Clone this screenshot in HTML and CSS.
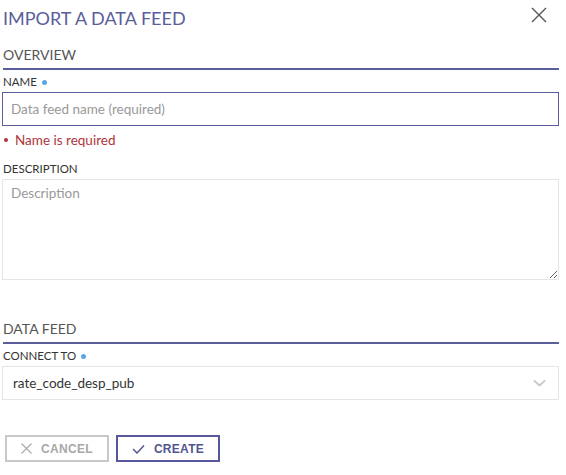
FILE: index.html
```html
<!DOCTYPE html>
<html>
<head>
<meta charset="utf-8">
<link rel="stylesheet" href="styles.css">
</head>
<body>
<div class="dialog">
  <div class="header">
    <h1 class="title">IMPORT A DATA FEED</h1>
    <button class="close" aria-label="Close">
      <svg width="16" height="16" viewBox="0 0 16 16"><path d="M1 1L15 15M15 1L1 15" stroke="#555" stroke-width="1.4" fill="none"/></svg>
    </button>
  </div>

  <div class="section">
    <h2 class="section-title">OVERVIEW</h2>
    <div class="field">
      <label class="label">NAME <span class="req"></span></label>
      <input class="input input-focus" type="text" placeholder="Data feed name (required)">
      <div class="error"><span class="err-dot"></span>Name is required</div>
    </div>
    <div class="field">
      <label class="label">DESCRIPTION</label>
      <textarea class="textarea" placeholder="Description"></textarea>
    </div>
  </div>

  <div class="section section-feed">
    <h2 class="section-title">DATA FEED</h2>
    <div class="field">
      <label class="label">CONNECT TO <span class="req"></span></label>
      <div class="select">
        <span class="select-value">rate_code_desp_pub</span>
        <svg class="chev" width="13" height="8" viewBox="0 0 13 8"><path d="M1 1.5L6.5 6.5L12 1.5" stroke="#c8c8c8" stroke-width="1.8" fill="none"/></svg>
      </div>
    </div>
  </div>

  <div class="actions">
    <button class="btn btn-cancel">
      <svg width="11" height="11" viewBox="0 0 11 11"><path d="M0.5 0.5L10.5 10.5M10.5 0.5L0.5 10.5" stroke="#aaa" stroke-width="1.2" fill="none"/></svg>
      CANCEL
    </button>
    <button class="btn btn-create">
      <svg width="13" height="10" viewBox="0 0 13 10"><path d="M1 5L5 9L12 1.5" stroke="#52558f" stroke-width="1.5" fill="none"/></svg>
      CREATE
    </button>
  </div>
</div>
</body>
</html>
```

FILE: styles.css
```css
* { box-sizing: border-box; }
body {
  margin: 0;
  background: #fff;
  font-family: "Lato", "Open Sans", sans-serif;
  color: #333;
}
.dialog {
  width: 557px;
  margin-left: 2px;
}
.header {
  display: flex;
  justify-content: space-between;
  align-items: flex-start;
  height: 43px;
}
.title {
  margin: 6px 0 0 1px;
  font-size: 18px;
  line-height: 24px;
  font-weight: 400;
  color: #5a5e9a;
}
.close {
  border: 0;
  background: none;
  padding: 0;
  margin: 7px 12px 0 0;
  width: 16px;
  height: 16px;
  display: flex;
}
.section-title {
  margin: 0 0 0 1px;
  font-size: 14px;
  line-height: 24px;
  font-weight: 400;
  color: #555;
  padding-bottom: 1px;
  border-bottom: 2px solid #5a5e9a;
}
.field {
  display: flex;
  flex-direction: column;
}
.label {
  display: flex;
  align-items: center;
  gap: 5px;
  font-size: 11.5px;
  line-height: 14px;
  margin: 5px 0 3px 1px;
  color: #333;
}
.req {
  width: 5px;
  height: 5px;
  border-radius: 50%;
  background: #5ba4e6;
  display: inline-block;
}
.input {
  height: 34px;
  border: 1px solid #e3e3e3;
  padding: 0 8px;
  font-family: inherit;
  font-size: 13.5px;
  color: #333;
  outline: none;
}
.input-focus { border-color: #5a5e9a; }
.input::placeholder, .textarea::placeholder { color: #999; }
.error {
  display: flex;
  align-items: center;
  font-size: 13.5px;
  line-height: 16px;
  margin: 6px 0 9px;
  color: #b0343a;
}
.err-dot {
  width: 4px;
  height: 4px;
  border-radius: 50%;
  background: #b0343a;
  margin: 0 7px 0 2px;
}
.textarea {
  height: 101px;
  border: 1px solid #e6e6e6;
  padding: 5px 8px;
  font-family: inherit;
  font-size: 13.5px;
  resize: vertical;
  outline: none;
}
.section-feed { margin-top: 37px; }
.select {
  height: 34px;
  border: 1px solid #e6e6e6;
  display: flex;
  align-items: center;
  justify-content: space-between;
  padding: 0 12px 0 10px;
}
.select-value { font-size: 13.5px; color: #333; }
.actions {
  display: flex;
  gap: 7px;
  margin: 35px 0 0 3px;
}
.btn {
  height: 27px;
  width: 104px;
  display: flex;
  align-items: center;
  justify-content: center;
  gap: 9px;
  background: #fff;
  font-family: "Liberation Sans", Arial, sans-serif;
  font-weight: 700;
  font-size: 12px;
  letter-spacing: 0.3px;
  padding: 0;
}
.btn-cancel { border: 2px solid #c8c8c8; color: #a8a8a8; }
.btn-create { border: 2px solid #55589a; color: #52558f; }
```
